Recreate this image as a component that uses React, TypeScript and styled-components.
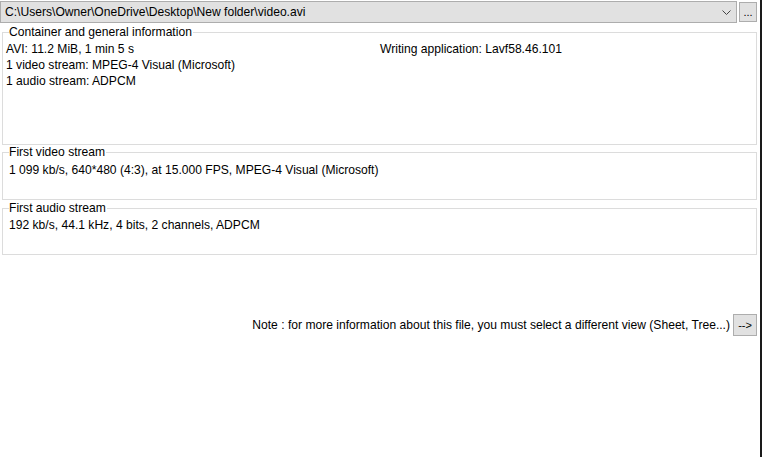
import { FC } from 'react';
import styled, { createGlobalStyle } from 'styled-components';

const GlobalStyle = createGlobalStyle`
	html, body {
		margin: 0;
		padding: 0;
		background: #ffffff;
	}
	body {
		font-family: 'Liberation Sans', Arial, sans-serif;
		font-size: 12.1px;
		color: #000000;
	}
`;

interface Section {
	title: string;
	height: number;
	indent: number;
	top: number;
	offset: number;
	lines: string[][];
}

const sections: Section[] = [
	{
		title: 'Container and general information',
		height: 120,
		indent: 3,
		top: 2,
		offset: 0,
		lines: [
			['AVI: 11.2 MiB, 1 min 5 s', 'Writing application: Lavf58.46.101'],
			['1 video stream: MPEG-4 Visual (Microsoft)'],
			['1 audio stream: ADPCM'],
		],
	},
	{
		title: 'First video stream',
		height: 55,
		indent: 6,
		top: 3,
		offset: 0,
		lines: [['1 099 kb/s, 640*480 (4:3), at 15.000 FPS, MPEG-4 Visual (Microsoft)']],
	},
	{
		title: 'First audio stream',
		height: 54,
		indent: 6,
		top: 2,
		offset: 1,
		lines: [['192 kb/s, 44.1 kHz, 4 bits, 2 channels, ADPCM']],
	},
];

const App: FC = () => {
	return (
		<>
			<GlobalStyle />
			<Window>
				<Main>
					<TopBar>
						<FileCombo>
							<ComboText>C:\Users\Owner\OneDrive\Desktop\New folder\video.avi</ComboText>
							<svg width="9" height="5" viewBox="0 0 9 5">
								<polyline points="0.5,0.5 4.5,4.5 8.5,0.5" fill="none" stroke="#444" strokeWidth="1" />
							</svg>
						</FileCombo>
						<SmallButton>...</SmallButton>
					</TopBar>

					<Groups>
						{sections.map((s) => (
							<Group key={s.title} height={s.height} offset={s.offset}>
								<GroupTitle>{s.title}</GroupTitle>
								<GroupBody indent={s.indent} top={s.top}>
									{s.lines.map((cols, i) => (
										<Line key={i}>
											{cols.map((c, j) => (
												<Cell key={j} wide={j === 0 && cols.length > 1}>
													{c}
												</Cell>
											))}
										</Line>
									))}
								</GroupBody>
							</Group>
						))}
					</Groups>

					<NoteRow>
						<NoteText>
							Note : for more information about this file, you must select a different view (Sheet, Tree...)
						</NoteText>
						<ArrowButton>--&gt;</ArrowButton>
					</NoteRow>
				</Main>
				<EdgeLine />
			</Window>
		</>
	);
};

const Window = styled.div`
	display: flex;
	width: 762px;
	height: 457px;
	background: #ffffff;
	overflow: hidden;
`;

const Main = styled.div`
	display: flex;
	flex-direction: column;
	width: 760px;
`;

const EdgeLine = styled.div`
	width: 2px;
	height: 100%;
	background: #1a1a1a;
`;

const TopBar = styled.div`
	display: flex;
	align-items: flex-start;
	gap: 2px;
	padding-top: 1px;
	height: 23px;
`;

const FileCombo = styled.div`
	box-sizing: border-box;
	display: flex;
	align-items: center;
	justify-content: space-between;
	width: 737px;
	height: 22px;
	padding: 0 5px 0 4px;
	border: 1px solid #adadad;
	background: #e1e1e1;
`;

const ComboText = styled.span`
	white-space: nowrap;
	line-height: 14px;
`;

const SmallButton = styled.div`
	box-sizing: border-box;
	display: flex;
	align-items: center;
	justify-content: center;
	width: 18px;
	height: 20px;
	margin-top: 1px;
	border: 1px solid #adadad;
	background: #e1e1e1;
	font-size: 11px;
	line-height: 14px;
`;

const Groups = styled.div`
	display: flex;
	flex-direction: column;
	padding: 1px 3px 0 2px;
`;

const Group = styled.fieldset<{ height: number; offset: number }>`
	box-sizing: border-box;
	height: ${(p) => p.height}px;
	margin: ${(p) => p.offset}px 0 0 0;
	padding: 0;
	border: 1px solid #dcdcdc;
	min-width: 0;
`;

const GroupTitle = styled.legend`
	margin-left: 6px;
	padding: 0 1px 0 0;
	line-height: 14px;
	white-space: nowrap;
`;

const GroupBody = styled.div<{ indent: number; top: number }>`
	padding: ${(p) => p.top}px 0 0 ${(p) => p.indent}px;
`;

const Line = styled.div`
	display: flex;
	height: 16px;
	line-height: 16px;
	white-space: nowrap;
`;

const Cell = styled.span<{ wide: boolean }>`
	width: ${(p) => (p.wide ? '374px' : 'auto')};
`;

const NoteRow = styled.div`
	display: flex;
	align-items: center;
	justify-content: flex-end;
	gap: 3px;
	padding: 59px 3px 0 0;
`;

const NoteText = styled.span`
	white-space: nowrap;
	line-height: 16px;
`;

const ArrowButton = styled.div`
	box-sizing: border-box;
	display: flex;
	align-items: center;
	justify-content: center;
	width: 24px;
	height: 22px;
	border: 1px solid #adadad;
	background: #e1e1e1;
	line-height: 14px;
	font-size: 11px;
`;

export default App;
